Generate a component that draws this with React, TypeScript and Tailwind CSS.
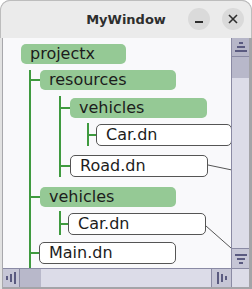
import React from "react";

type Node = { label: string; kind: "dir" | "file"; cls: string };

const nodes: Node[] = [
  { label: "projectx", kind: "dir", cls: "ml-[18px] mt-[6px] w-[105px]" },
  { label: "resources", kind: "dir", cls: "ml-[37px] mt-[6px] w-[136px]" },
  { label: "vehicles", kind: "dir", cls: "ml-[67px] mt-[8px] w-[137px]" },
  { label: "Car.dn", kind: "file", cls: "ml-[93px] mt-[6px] w-[136px]" },
  { label: "Road.dn", kind: "file", cls: "ml-[67px] mt-[9px] w-[138px]" },
  { label: "vehicles", kind: "dir", cls: "ml-[37px] mt-[10px] w-[136px]" },
  { label: "Car.dn", kind: "file", cls: "ml-[65px] mt-[6px] w-[138px]" },
  { label: "Main.dn", kind: "file", cls: "ml-[36px] mt-[7px] w-[137px]" },
];

function TreeNode({ n }: { n: Node }) {
  if (n.kind === "dir") {
    return (
      <div
        className={`${n.cls} shrink-0 h-[20px] rounded-[5px] bg-[#95c995] pl-[9px] text-[16px] leading-[20px] text-[#1c1c1c] whitespace-nowrap relative`}
      >
        {n.label}
      </div>
    );
  }
  return (
    <div
      className={`${n.cls} shrink-0 h-[22px] rounded-[5px] border border-[#555555] bg-white pl-[9px] text-[16px] leading-[20px] text-[#1c1c1c] whitespace-nowrap relative`}
    >
      {n.label}
    </div>
  );
}

function Connectors() {
  const g = "#3f9a3f";
  return (
    <svg className="absolute inset-0 pointer-events-none" width="228" height="230">
      {/* level 1 */}
      <line x1="27" y1="32" x2="27" y2="230" stroke={g} strokeWidth="2" />
      <line x1="27" y1="42" x2="37" y2="42" stroke={g} strokeWidth="2" />
      <line x1="27" y1="159" x2="37" y2="159" stroke={g} strokeWidth="2" />
      <line x1="27" y1="215" x2="36" y2="215" stroke={g} strokeWidth="2" />
      {/* resources children */}
      <line x1="57" y1="58" x2="57" y2="139" stroke={g} strokeWidth="2" />
      <line x1="57" y1="70" x2="67" y2="70" stroke={g} strokeWidth="2" />
      <line x1="57" y1="128" x2="67" y2="128" stroke={g} strokeWidth="2" />
      {/* vehicles children */}
      <line x1="85" y1="85" x2="85" y2="108" stroke={g} strokeWidth="2" />
      <line x1="85" y1="97" x2="93" y2="97" stroke={g} strokeWidth="2" />
      {/* second vehicles children */}
      <line x1="57" y1="173" x2="57" y2="197" stroke={g} strokeWidth="2" />
      <line x1="57" y1="186" x2="65" y2="186" stroke={g} strokeWidth="2" />
      {/* edges leaving view */}
      <line x1="205" y1="127" x2="229" y2="132" stroke="#555" strokeWidth="1" />
      <line x1="203" y1="188" x2="228" y2="210" stroke="#555" strokeWidth="1" />
    </svg>
  );
}

function HLines({ reverse }: { reverse?: boolean }) {
  const widths = reverse ? [12, 8, 4] : [4, 8, 12];
  return (
    <div className="flex flex-col items-center gap-[2px]">
      {widths.map((w, i) => (
        <div key={i} className="h-[2px] bg-[#5a5a80]" style={{ width: w }} />
      ))}
    </div>
  );
}

function VBars({ reverse }: { reverse?: boolean }) {
  const hs = reverse ? [12, 8, 4] : [4, 8, 12];
  return (
    <div className="flex items-center gap-[2px]">
      {hs.map((h, i) => (
        <div key={i} className="w-[2px] bg-[#5a5a80]" style={{ height: h }} />
      ))}
    </div>
  );
}

export default function App() {
  return (
    <div
      className="w-[252px] h-[289px] bg-white"
      style={{ fontFamily: '"DejaVu Sans", "Liberation Sans", sans-serif' }}
    >
      <div className="w-[252px] h-[289px] flex flex-col rounded-t-[10px] overflow-hidden bg-[#a4a4a8]">
        {/* title bar */}
        <div className="h-[38px] shrink-0 bg-[#ebebeb] rounded-t-[10px] border border-b-0 border-[#bdbdbd] flex items-center relative">
          <div className="absolute left-0 right-0 top-[10px] text-center text-[13px] font-bold text-[#2e2e2e] leading-[18px]">
            MyWindow
          </div>
          <div className="ml-auto flex items-center gap-[12px] mr-[7px] mt-[-1px]">
            <div className="w-[22px] h-[22px] rounded-full bg-[#dadada] flex items-center justify-center">
              <div className="w-[8px] h-[2px] bg-[#2e2e2e] mt-[6px]" />
            </div>
            <div className="w-[22px] h-[22px] rounded-full bg-[#dadada] flex items-center justify-center">
              <svg width="10" height="10" viewBox="0 0 10 10">
                <path d="M1 1 L9 9 M9 1 L1 9" stroke="#2e2e2e" strokeWidth="1.6" />
              </svg>
            </div>
          </div>
        </div>
        {/* body */}
        <div className="flex-1 flex flex-col pl-[3px] pr-[3px] pb-[2px] bg-[linear-gradient(to_right,#e2e2e2_0px,#e2e2e2_2px,#a8a8ac_2px,#a8a8ac_3px,transparent_3px)]">
          <div className="flex h-[230px]">
            <div className="relative w-[228px] h-[230px] overflow-hidden bg-[#f9f9fb] flex flex-col">
              <Connectors />
              {nodes.map((n, i) => (
                <TreeNode key={i} n={n} />
              ))}
            </div>
            {/* vertical scrollbar */}
            <div className="w-[18px] h-[230px] flex flex-col border-l border-[#8a8aa4] bg-[#dcdce8]">
              <div className="h-[19px] bg-[#b6b6c8] border-b border-[#8a8aa4] flex items-center justify-center">
                <HLines />
              </div>
              <div className="h-[21px] bg-[#b8b8ca]" />
              <div className="flex-1 bg-[#dcdce8]" />
              <div className="h-[20px] bg-[#c6c6d6] border-t border-[#8a8aa4] flex items-center justify-center">
                <HLines reverse />
              </div>
            </div>
          </div>
          {/* horizontal scrollbar */}
          <div className="h-[19px] flex border-t border-[#8a8aa4] bg-[#dcdce8]">
            <div className="w-[17px] bg-[#c6c6d6] border-r border-[#8a8aa4] flex items-center justify-center">
              <VBars />
            </div>
            <div className="w-[21px] bg-[#b8b8ca]" />
            <div className="flex-1 bg-[#dcdce8]" />
            <div className="w-[20px] bg-[#c6c6d6] border-l border-[#8a8aa4] flex items-center justify-center">
              <VBars reverse />
            </div>
            <div className="w-[18px] bg-[#dcdce8] border-l border-[#8a8aa4]" />
          </div>
        </div>
      </div>
    </div>
  );
}
